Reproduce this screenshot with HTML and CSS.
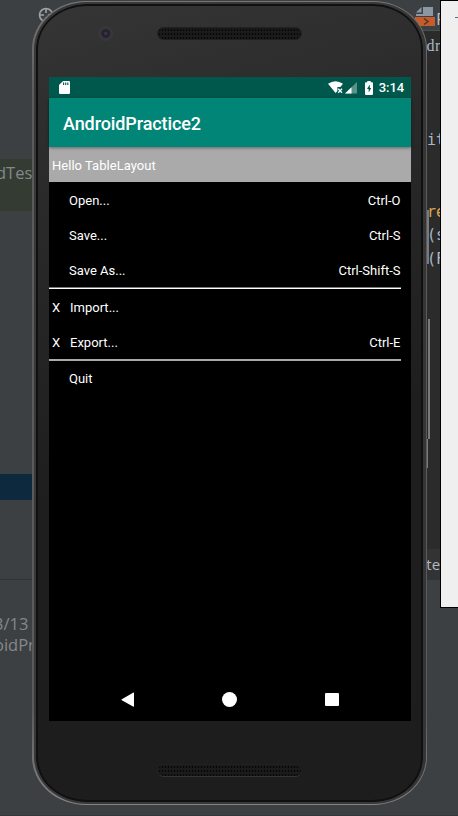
FILE: index.html
```html
<!DOCTYPE html>
<html lang="en">
<head>
<meta charset="utf-8">
<title>AndroidPractice2</title>
<link rel="stylesheet" href="styles.css">
</head>
<body>
<div class="desktop">
  <aside class="project">
    <svg class="target-icon" width="16" height="16" viewBox="0 0 16 16" fill="none" stroke="#a0a3a5" stroke-width="1.6"><circle cx="8" cy="8" r="6.5"/><path d="M8 1v5M8 10v5M1 8h5M10 8h5"/></svg>
    <div class="test-row"><span>dTest</span></div>
    <div class="selected-row"></div>
    <div class="log"><span>3/13</span><span>oidPra</span></div>
  </aside>
  <section class="editor">
    <div class="tab"><svg width="20" height="20" viewBox="0 0 20 20"><path d="M8 1h10v9H1V8h7z" fill="#8b98a3"/><path d="M1 6.500L6.500 1v5.500z" fill="#8b98a3"/><path d="M0 11h20v9H0z" fill="#c75b2b"/><path d="M9 12.500l4 3-4 3" fill="none" stroke="#4c352b" stroke-width="1.500"/></svg><span>F</span></div>
    <span class="code c1">.dr</span>
    <span class="code c2">it</span>
    <span class="code c3">re</span>
    <span class="code c4">(s</span>
    <span class="code c5">(F</span>
    <i class="rule r1"></i><i class="rule r2"></i><i class="rule r3"></i>
    <div class="crumb">ate</div>
  </section>

  <main class="phone">
    <div class="bezel">
      <div class="top">
        <i class="camera"></i>
        <i class="speaker"></i>
      </div>
      <div class="screen">
        <div class="status">
          <svg class="sd" width="11" height="13" viewBox="0 0 11 13"><path d="M4 0h5.800Q11 0 11 1.200v10.600Q11 13 9.800 13H1.200Q0 13 0 11.800V4z" fill="#fff"/><path d="M4.600 1.500v2.400M6.700 1.500v2.400M8.800 1.500v2.400" stroke="#00574b" stroke-width="1.100"/></svg>
          <svg class="net" width="30" height="13" viewBox="0 0 30 13"><path d="M0 2.800Q7.500-2.400 15 2.800L12.400 6H9.400v4L7.600 12z" fill="#fff"/><path d="M10.200 7.800l3.800 4M14 7.800l-3.800 4" stroke="#fff" stroke-width="1.300"/><path d="M29 1v11.500H17z" fill="#5c9188"/><path d="M23.500 6.300v6.200H17z" fill="#fff"/></svg>
          <svg class="battery" width="8" height="14" viewBox="0 0 8 14"><path d="M2.300 0h3.400v1.300H7q1 0 1 1V13q0 1-1 1H1q-1 0-1-1V2.300q0-1 1-1h1.300z" fill="#fff"/><path d="M4.800 3.500L2 8h1.700v3.500L6.200 7H4.800z" fill="#00574b"/></svg>
          <span class="time">3:14</span>
        </div>
        <header class="appbar">AndroidPractice2</header>
        <div class="hello">Hello TableLayout</div>
        <div class="menu">
          <div class="row"><b></b><span>Open...</span><kbd>Ctrl-O</kbd></div>
          <div class="row"><b></b><span>Save...</span><kbd>Ctrl-S</kbd></div>
          <div class="row"><b></b><span>Save As...</span><kbd>Ctrl-Shift-S</kbd></div>
          <div class="line"></div>
          <div class="row checked"><b>X</b><span>Import...</span></div>
          <div class="row checked"><b>X</b><span>Export...</span><kbd>Ctrl-E</kbd></div>
          <div class="line soft"></div>
          <div class="row last"><b></b><span>Quit</span></div>
        </div>
        <nav class="nav">
          <svg width="14" height="16" viewBox="0 0 14 16"><path d="M.8 7.200L12 .7q1-.5 1 .4v13q0 1-1 .4L.8 8.300q-.8-.5 0-1.100z" fill="#fff"/></svg>
          <i class="home"></i>
          <i class="recent"></i>
        </nav>
      </div>
      <div class="bottom"><i class="speaker"></i></div>
    </div>
  </main>

  <div class="toolbar"><i></i></div>
</div>
</body>
</html>
```
FILE: styles.css
```css
* { box-sizing: border-box; }
body { margin: 0; }
.desktop {
  position: relative;
  width: 458px;
  height: 816px;
  overflow: hidden;
  background: #3c4043;
  border-bottom: 1px solid #34363a;
  font-family: Roboto, sans-serif;
}

/* windows behind the device */
.project {
  width: 60px;
  height: 816px;
  display: flex;
  flex-direction: column;
  font: 16.5px/21px "Open Sans", "Noto Sans", sans-serif;
  color: #85888a;
}
.target-icon { margin: 7px 0 0 38px; flex: none; }
.test-row {
  height: 52px;
  margin-top: 136px;
  padding-top: 3px;
  background: #343b32;
  white-space: nowrap;
}
.test-row span, .log span { display: block; margin-left: -4px; white-space: nowrap; }
.selected-row { height: 26px; margin-top: 263px; background: #0d293e; }
.log { flex: 1; margin-top: 79px; padding-top: 33px; border-top: 1px solid #303335; }
.log span { margin-left: -6px; }

.editor {
  position: absolute;
  left: 400px;
  top: 0;
  width: 58px;
  height: 580px;
  background: #2b2b2b;
}
.tab {
  display: flex;
  height: 31px;
  padding: 6px 0 0 15px;
  gap: 1px;
  background: #3c4043;
  border-bottom: 1px solid #4b4d4f;
  font: 17px/25px "Open Sans", sans-serif;
  color: #b8bcc0;
}
.tab svg { flex: none; }
.code {
  position: absolute;
  left: 27px;
  font: 15px/18px "DejaVu Sans Mono", monospace;
  color: #a9b7c6;
}
.c1 { top: 37px; left: 22px; font: 16px/18px "Liberation Serif", serif; letter-spacing: .5px; }
.c2 { top: 131px; }
.c3 { top: 203px; color: #e0a650; }
.c4 { top: 226px; }
.c5 { top: 250px; }
.rule { position: absolute; background: #7a7a7a; width: 2px; }
.r1 { left: 27px; top: 210px; height: 54px; }
.r2 { left: 28px; top: 319px; height: 120px; }
.r3 { left: 27px; top: 439px; height: 29px; width: 1px; }
.crumb {
  position: absolute;
  left: 0;
  right: 0;
  bottom: 0;
  height: 31px;
  padding-left: 18px;
  background: #313335;
  font: 15px/31px "Open Sans", sans-serif;
  color: #b6babd;
}
.toolbar {
  position: absolute;
  left: 440px;
  top: 0;
  width: 20px;
  height: 608px;
  border: 1px solid #000;
  background: #efefef;
}
.toolbar i { display: block; width: 5px; height: 1px; margin: 16px 0 0 14px; background: #5d6d79; }

/* device */
.phone {
  position: absolute;
  left: 32px;
  top: 1px;
  width: 395px;
  height: 804px;
  padding: 1px 1px 1px 2px;
  border-radius: 54px / 48px;
  background: linear-gradient(#777, #5c5b5b 12%, #5c5a5a 88%, #858383);
}
.bezel {
  height: 802px;
  border-radius: 53px / 47px;
  border: 2px solid #383838;
  border-right: 3px solid #353535;
  box-shadow: inset 0 0 0 2px #101010;
  padding: 1px 13px;
  background: linear-gradient(165deg, #353535, #2a2a2a 22%, #1e1e1e 55%, #1d1d1d);
}
.top { position: relative; height: 72px; }
.camera {
  position: absolute;
  left: 49px;
  top: 21px;
  width: 15px;
  height: 15px;
  border-radius: 50%;
  background: radial-gradient(circle at 52% 50%, #4a3440 0 1px, #252330 2px 4px, #37373a 5px);
}
.speaker {
  position: absolute;
  left: 108px;
  top: 22px;
  width: 145px;
  height: 13px;
  border-radius: 7px;
  border: 1px solid #202020;
  background: radial-gradient(circle, #080808 0 .7px, #1b1b1b 1.2px) 0 0 / 3px 4px;
}
.bottom { position: relative; height: 80px; }
.bottom .speaker { left: 108px; top: 43px; border-bottom-color: #333; }

.screen {
  width: 362px;
  height: 644px;
  display: flex;
  flex-direction: column;
  background: #000;
  color: #fff;
  font-size: 13px;
}
.status {
  display: flex;
  align-items: center;
  height: 21px;
  padding: 0 7px 0 10px;
  background: #00574b;
}
.net { margin-left: auto; }
.battery { margin: 0 6px 0 7px; }
.time { font-size: 13px; font-weight: 500; line-height: 21px; letter-spacing: -.1px; }
.appbar {
  position: relative;
  height: 49px;
  padding: 1px 14px 0;
  background: #008577;
  box-shadow: 0 1px 3px rgba(0, 0, 0, .4);
  font-size: 18px;
  font-weight: 500;
  line-height: 49px;
  letter-spacing: -.1px;
}
.hello {
  height: 35px;
  padding-left: 3px;
  background: #aaa;
  line-height: 37px;
  letter-spacing: .03px;
}
.menu { flex: 1; }
.row { display: flex; height: 35px; line-height: 38px; padding: 0 10.5px 0 3px; }
.row b { width: 17px; font-weight: 400; }
.row.checked b { width: 18px; }
.row kbd { margin-left: auto; font: inherit; }
.line { height: 2px; width: 352px; background: linear-gradient(#777 50%, #fff 50%); }
.line + .row { line-height: 37px; }
.line + .row.last { line-height: 36px; }
.line.soft { background: #aaa; }
.nav {
  display: flex;
  align-items: center;
  justify-content: space-between;
  height: 43px;
  padding: 0 72px;
}
.home { width: 15px; height: 15px; margin-right: 1px; border-radius: 50%; background: #fff; }
.recent { width: 14px; height: 13px; border-radius: 1px; background: #fff; }
```
